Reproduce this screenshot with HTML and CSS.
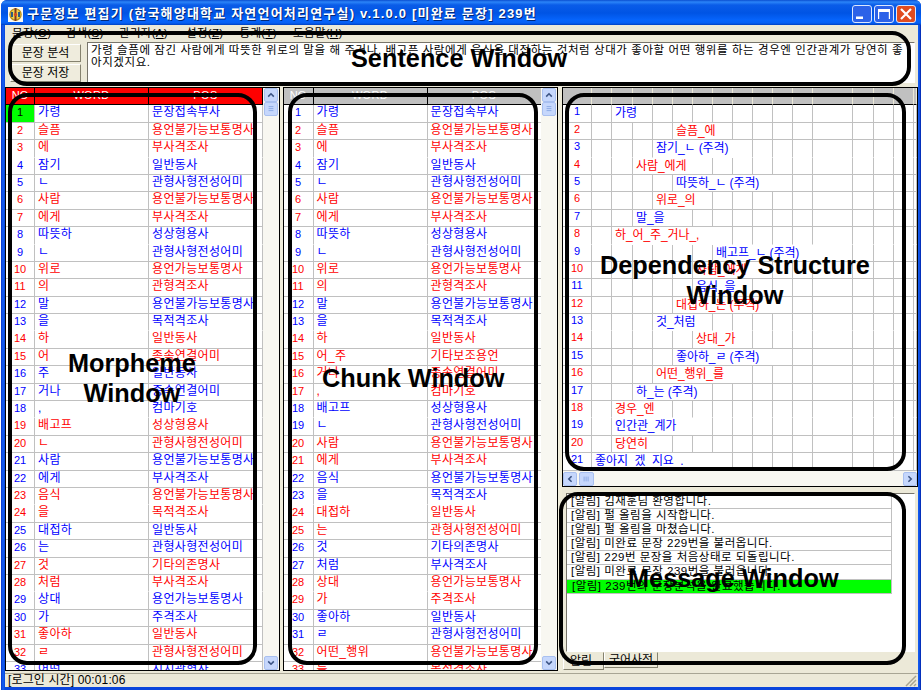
FILE: index.html
```html
<!DOCTYPE html>
<html lang="ko">
<head>
<meta charset="utf-8">
<title>구문정보 편집기</title>
<link rel="stylesheet" href="styles.css">
</head>
<body>
<div class="window">
  <header class="titlebar">
    <svg class="app-icon" width="15" height="15" viewBox="0 0 15 15">
      <rect width="15" height="15" fill="#fbfaf2"/>
      <circle cx="7.5" cy="7.5" r="5.6" fill="#f2d24a" stroke="#b8901c" stroke-width="1.4"/>
      <path d="M7.5 1v13" stroke="#7c3a20" stroke-width="2"/>
      <path d="M4 5v5M11 5v5" stroke="#2c5c80" stroke-width="2"/>
      <circle cx="7.5" cy="7.5" r="1.6" fill="#d84820"/>
    </svg>
    <h1 class="title">구문정보 편집기 (한국해양대학교 자연언어처리연구실) v.1.0.0 [미완료 문장] 239번</h1>
    <div class="controls">
      <svg class="control" viewBox="0 0 20 18"><rect x=".5" y=".5" width="19" height="17" rx="2.5"/><path d="M4 11.500h7v2.500H4z" class="glyph"/></svg>
      <svg class="control" viewBox="0 0 20 18"><rect x=".5" y=".5" width="19" height="17" rx="2.5"/><path d="M4 4h12v10h-1.200V7H5.200v7H4z" class="glyph"/></svg>
      <svg class="control close" viewBox="0 0 20 18"><rect x=".5" y=".5" width="19" height="17" rx="2.5"/><path d="M5 4l10 10M15 4L5 14" class="cross"/></svg>
    </div>
  </header>
  <nav class="menu">
    <span>문장(<u>O</u>)</span><span>검색(<u>S</u>)</span><span class="wide">관리자(<u>A</u>)</span><span>설정(<u>Z</u>)</span><span>통계(<u>T</u>)</span><span>도움말(<u>H</u>)</span>
  </nav>
  <section class="sentence">
    <div class="buttons">
      <button class="button">문장 분석</button>
      <button class="button">문장 저장</button>
    </div>
    <div class="text-box">
      <div class="line line-long">가령 슬픔에 잠긴 사람에게 따뜻한 위로의 말을 해 주거나, 배고픈 사람에게 음식을 대접하는 것처럼 상대가 좋아할 어떤 행위를 하는 경우엔 인간관계가 당연히 좋</div>
      <div class="line">아지겠지요.</div>
    </div>
  </section>
  <main class="panes">
    <section class="pane morphemes">
      <div class="table">
        <div class="row head"><span>NO</span><span>WORD</span><span>POS</span></div>
        <div id="morphemes"></div>
      </div>
      <div class="vscroll">
        <svg class="sb" viewBox="0 0 15 15"><path d="M4 9.500L7.500 6 11 9.500"/></svg>
        <svg class="sb thumb" viewBox="0 0 15 15"><path d="M4.500 4.500h6M4.500 7h6M4.500 9.500h6"/></svg>
        <svg class="sb last" viewBox="0 0 15 15"><path d="M4 5.500L7.500 9 11 5.500"/></svg>
      </div>
    </section>
    <section class="pane chunks">
      <div class="table">
        <div class="row head"><span>NO</span><span>WORD</span><span>POS</span></div>
        <div id="chunks"></div>
      </div>
      <div class="vscroll">
        <svg class="sb" viewBox="0 0 15 15"><path d="M4 9.500L7.500 6 11 9.500"/></svg>
        <svg class="sb thumb" viewBox="0 0 15 15"><path d="M4.500 4.500h6M4.500 7h6M4.500 9.500h6"/></svg>
        <svg class="sb last" viewBox="0 0 15 15"><path d="M4 5.500L7.500 9 11 5.500"/></svg>
      </div>
    </section>
    <div class="right">
      <section class="pane structure">
        <div class="tree" id="tree"></div>
        <div class="hscroll">
          <svg class="sb" viewBox="0 0 15 15"><path d="M9.500 4L6 7.500 9.500 11"/></svg>
          <svg class="sb thumb" viewBox="0 0 15 15"><path d="M4.500 4.500v6M7 4.500v6M9.500 4.500v6"/></svg>
          <svg class="sb last" viewBox="0 0 15 15"><path d="M5.500 4L9 7.500 5.500 11"/></svg>
        </div>
      </section>
      <section class="messages">
        <ul class="log">
          <li>[알림] 김재훈님 환영합니다.</li>
          <li>[알림] 펄 올림을 시작합니다.</li>
          <li>[알림] 펄 올림을 마쳤습니다.</li>
          <li>[알림] 미완료 문장 229번을 불러옵니다.</li>
          <li>[알림] 229번 문장을 처음상태로 되돌립니다.</li>
          <li>[알림] 미완료 문장 239번을 불러옵니다.</li>
          <li class="current">[알림] 239번의 문장분석을 완료했습니다.</li>
        </ul>
        <div class="tabs"><span class="tab active">알림</span><span class="tab">국어사전</span></div>
      </section>
    </div>
  </main>
  <footer class="status">
    <span>[로그인 시간] 00:01:06</span>
    <svg width="12" height="12" viewBox="0 0 12 12"><path d="M1 11L11 1M5 11l6-6M9 11l2-2" stroke="#a8a490" stroke-width="1.500"/></svg>
  </footer>
</div>

<div class="outline o-sentence"></div>
<div class="outline o-morpheme"></div>
<div class="outline o-chunk"></div>
<div class="outline o-structure"></div>
<div class="outline o-message"></div>
<div class="label l-sentence">Sentence Window</div>
<div class="label l-morpheme">Morpheme<br>Window</div>
<div class="label l-chunk">Chunk Window</div>
<div class="label l-structure">Dependency Structure<br>Window</div>
<div class="label l-message">Message Window</div>
<script src="app.js"></script>
</body>
</html>
```
FILE: styles.css
```css
* { box-sizing: border-box; }

body {
  margin: 0;
  width: 922px;
  height: 692px;
  overflow: hidden;
  position: relative;
  background: #fff;
  color: #000;
  font: 12px/14px "Liberation Sans", "Noto Sans CJK KR", sans-serif;
}

.window {
  width: 920px;
  height: 690px;
  margin-left: 1px;
  padding: 0 3px 3px 4px;
  display: flex;
  flex-direction: column;
  background: linear-gradient(90deg, #0a34c8 0, #1560f4 2px, #0a45dc 4px, #0a45dc 916px, #1560f4 918px, #0020a8 920px);
  border-radius: 6px 6px 0 0;
  overflow: hidden;
}

.titlebar {
  height: 25px;
  flex: none;
  margin: 0 -3px 0 -4px;
  padding: 3px 5px 0 7px;
  display: flex;
  align-items: center;
  background: linear-gradient(#0a4ed0 0, #2b84f8 2px, #0a5ce8 5px, #0054e4 13px, #0664fc 20px, #0660f4 23px, #0040c0 25px);
}
.title {
  margin: 0 0 0 4px;
  color: #fff;
  font-size: 13px;
  line-height: 20px;
  letter-spacing: 1.2px;
  white-space: nowrap;
  text-shadow: 1px 1px 0 #002878;
}
.controls { margin-left: auto; display: flex; gap: 2px; }
.control { width: 20px; height: 18px; }
.control rect { fill: #2c62e8; stroke: #dce8ff; }
.control .glyph { fill: #fff; }
.control .cross { stroke: #fff; stroke-width: 2.2; }
.control.close rect { fill: #e04c20; }

.menu {
  height: 17px;
  flex: none;
  padding: 1px 0 0 7px;
  display: flex;
  background: #ece9d8;
  font-size: 11.5px;
  letter-spacing: 0.3px;
}
.menu span { width: 53.5px; white-space: nowrap; }
.menu .wide { width: 67px; }

.sentence {
  height: 45px;
  flex: none;
  display: flex;
  gap: 6px;
  padding: 0 3px 4px 5px;
  background: #ece9d8;
}
.buttons { display: flex; flex-direction: column; gap: 2px; padding-top: 2px; }
.button {
  width: 71px;
  height: 18px;
  padding: 0;
  border: 1px solid;
  border-color: #fff #85826f #85826f #fff;
  background: #efecdd;
  color: #000;
  font: 12px/14px "Liberation Sans", "Noto Sans CJK KR", sans-serif;
}
.text-box {
  flex: 1;
  height: 41px;
  padding: 1px 3px 0;
  border: 1px solid;
  border-color: #77746a #fff #fff #77746a;
  background: #fff;
  font-size: 11.5px;
  line-height: 12px;
  letter-spacing: 0.58px;
  overflow: hidden;
}
.line { white-space: nowrap; }

.panes {
  height: 584px;
  flex: none;
  display: flex;
  gap: 4px;
  background: #efecda;
}
.pane { border: 1px solid #000; background: #fff; overflow: hidden; }
.morphemes, .chunks { display: flex; width: 275px; }
.chunks { width: 276px; margin-left: -1px; }
.table { flex: 1; overflow: hidden; }

.row {
  display: grid;
  grid-template-columns: 29px 114px 114px;
  height: 17.4px;
}
.chunks .row { grid-template-columns: 30px 114px 114px; }
.row span {
  padding-left: 3px;
  border-right: 1px solid #c0c0c0;
  border-bottom: 1px solid #c0c0c0;
  white-space: nowrap;
  overflow: hidden;
  line-height: 14px;
  font-size: 12px;
  letter-spacing: 0.35px;
}
.row span:first-child { padding: 0; text-align: center; font-size: 11px; letter-spacing: 0; }
.row.plain span { border-bottom-color: transparent; }
.row .selected { background: #00ff00; color: #000; }
.blue { color: #0000ff; }
.red { color: #ff0000; }
.row.head { color: #fff; background: #c0c0c0; }
.morphemes .row.head { background: #ff0000; }
.row.head span, .row.head span:first-child {
  padding: 0;
  text-align: center;
  border-color: #000;
  font-size: 11px;
  line-height: 15px;
}

.vscroll {
  width: 16px;
  display: flex;
  flex-direction: column;
  align-items: center;
  background: #f8f7f1;
}
.sb {
  display: block;
  width: 14px;
  height: 14px;
  flex: none;
  border: 1px solid #a9c0f0;
  border-radius: 2px;
  background: #c6d7fc;
  fill: none;
  stroke: #3c5484;
  stroke-width: 2;
}
.sb.thumb { stroke: #7f9fe0; stroke-width: 1; }
.vscroll .last { margin-top: auto; }

.right { flex: 1; display: flex; flex-direction: column; }
.structure { height: 400px; flex: none; display: flex; flex-direction: column; }
.tree { height: 383px; overflow: hidden; }
.branch {
  display: grid;
  grid-template-columns: 29px 20px 21px repeat(9, 20px) 40px 21px 20px 20px 3px;
  height: 17.4px;
}
.branch span {
  border-right: 1px solid #c0c0c0;
  border-bottom: 1px solid #c0c0c0;
  white-space: nowrap;
}
.branch.head { background: #c0c0c0; }
.branch.head span { border-color: #ece9d8; border-bottom-color: #000; }
.branch.plain span { border-bottom-color: transparent; }
.branch .index { text-align: center; font-size: 11px; line-height: 13px; }
.branch .node { padding-left: 3px; font-size: 12px; line-height: 16px; letter-spacing: -0.1px; }
.hscroll {
  height: 15px;
  display: flex;
  align-items: center;
  background: #f8f7f1;
}
.hscroll .thumb { margin-left: 2px; width: 15px; }
.hscroll .last { margin-left: auto; }

.messages { height: 184px; padding: 6px 0 0 4px; background: #ece9d8; }
.log {
  height: 159px;
  margin: 0 3px 0 0;
  padding: 1px 22px 0 0;
  list-style: none;
  background: #fff;
  border: 1px solid;
  border-color: #77746a #fff #fff #77746a;
  font-size: 11.5px;
  letter-spacing: 0.5px;
}
.log li {
  height: 14.1px;
  padding-left: 4px;
  line-height: 13px;
  border-bottom: 1px solid #c0c0c0;
  border-right: 1px solid #c0c0c0;
  white-space: nowrap;
}
.log .current { background: #00ff00; padding-left: 5px; }
.tabs { display: flex; align-items: flex-start; margin-left: -3px; }
.tab {
  height: 16px;
  padding: 0 4px;
  border: 1px solid;
  border-color: transparent #85826f #85826f #fff;
  line-height: 15px;
}
.tab.active { width: 41px; height: 18px; padding-left: 6px; line-height: 17px; }

.status {
  height: 16px;
  flex: none;
  padding: 0 1px 0 3px;
  display: flex;
  align-items: flex-end;
  justify-content: space-between;
  background: linear-gradient(#ece9d8 2px, #a8a594 2px, #a8a594 3px, #ece9d8 3px);
}
.status span { line-height: 14px; letter-spacing: 0.13px; }

.outline { position: absolute; border: 4px solid #000; border-radius: 19px; }
.o-sentence { left: 8px; top: 31px; width: 903px; height: 55px; }
.o-morpheme { left: 8px; top: 93px; width: 249px; height: 572px; }
.o-chunk { left: 288px; top: 93px; width: 250px; height: 572px; }
.o-structure { left: 565px; top: 93px; width: 341px; height: 378px; }
.o-message { left: 559px; top: 492px; width: 347px; height: 173px; }

.label {
  position: absolute;
  font: bold 25.3px/30px "Liberation Sans", sans-serif;
  text-align: center;
  white-space: nowrap;
}
.l-sentence { left: 351px; top: 43px; }
.l-morpheme { left: 68px; top: 348px; }
.l-chunk { left: 322px; top: 363px; }
.l-structure { left: 600px; top: 250px; }
.l-message { left: 628px; top: 563px; }
```
FILE: app.js
```js
const noun = '용언불가능보통명사';
const ending = '관형사형전성어미';

// Each entry: word, part of speech, colour (b = blue, r = red).
const morphemes = [
  ['가령', '문장접속부사', 'b'], ['슬픔', noun, 'r'], ['에', '부사격조사', 'r'],
  ['잠기', '일반동사', 'b'], ['ㄴ', ending, 'b'], ['사람', noun, 'r'],
  ['에게', '부사격조사', 'r'], ['따뜻하', '성상형용사', 'b'], ['ㄴ', ending, 'b'],
  ['위로', '용언가능보통명사', 'r'], ['의', '관형격조사', 'r'], ['말', noun, 'b'],
  ['을', '목적격조사', 'b'], ['하', '일반동사', 'r'], ['어', '종속연결어미', 'r'],
  ['주', '일반동사', 'b'], ['거나', '종속연결어미', 'b'], [',', '컴마기호', 'b'],
  ['배고프', '성상형용사', 'r'], ['ㄴ', ending, 'r'], ['사람', noun, 'b'],
  ['에게', '부사격조사', 'b'], ['음식', noun, 'r'], ['을', '목적격조사', 'r'],
  ['대접하', '일반동사', 'b'], ['는', ending, 'b'], ['것', '기타의존명사', 'r'],
  ['처럼', '부사격조사', 'r'], ['상대', '용언가능보통명사', 'b'], ['가', '주격조사', 'b'],
  ['좋아하', '일반동사', 'r'], ['ㄹ', ending, 'r'], ['어떤', '지시관형사', 'b']
];
const chunks = [
  ['가령', '문장접속부사', 'b'], ['슬픔', noun, 'r'], ['에', '부사격조사', 'r'],
  ['잠기', '일반동사', 'b'], ['ㄴ', ending, 'b'], ['사람', noun, 'r'],
  ['에게', '부사격조사', 'r'], ['따뜻하', '성상형용사', 'b'], ['ㄴ', ending, 'b'],
  ['위로', '용언가능보통명사', 'r'], ['의', '관형격조사', 'r'], ['말', noun, 'b'],
  ['을', '목적격조사', 'b'], ['하', '일반동사', 'r'], ['어_주', '기타보조용언', 'r'],
  ['거나', '종속연결어미', 'r'], [',', '컴마기호', 'r'], ['배고프', '성상형용사', 'b'],
  ['ㄴ', ending, 'b'], ['사람', noun, 'r'], ['에게', '부사격조사', 'r'],
  ['음식', noun, 'b'], ['을', '목적격조사', 'b'], ['대접하', '일반동사', 'r'],
  ['는', ending, 'r'], ['것', '기타의존명사', 'b'], ['처럼', '부사격조사', 'b'],
  ['상대', '용언가능보통명사', 'r'], ['가', '주격조사', 'r'], ['좋아하', '일반동사', 'b'],
  ['ㄹ', ending, 'b'], ['어떤_행위', noun, 'r'], ['를', '목적격조사', 'r']
];
// Each entry: depth, number of columns covered, text.
const tree = [
  [1, 2, '가령'], [4, 3, '슬픔_에'], [3, 5, '잠기_ㄴ (주격)'], [2, 4, '사람_에게'],
  [4, 6, '따뜻하_ㄴ (주격)'], [3, 3, '위로_의'], [2, 3, '말_을'], [1, 6, '하_어_주_거나_,'],
  [6, 6, '배고프_ㄴ (주격)'], [5, 4, '사람_에게'], [5, 3, '음식_을'], [4, 6, '대접하_는 (주격)'],
  [3, 3, '것_처럼'], [5, 3, '상대_가'], [4, 6, '좋아하_ㄹ (주격)'], [3, 5, '어떤_행위_를'],
  [2, 4, '하_는 (주격)'], [1, 3, '경우_엔'], [1, 5, '인간관_계가'], [1, 3, '당연히'],
  [0, 7, '좋아지_겠_지요_.']
];

const isPlain = i => i % 5 === 2 ? ' plain' : '';

function fillTable(id, data, selected) {
  document.getElementById(id).innerHTML = data.map(([word, pos, c], i) =>
    `<div class="row ${c === 'b' ? 'blue' : 'red'}${isPlain(i)}">` +
    `<span${i === selected ? ' class="selected"' : ''}>${i + 1}</span><span>${word}</span><span>${pos}</span></div>`
  ).join('');
}
fillTable('morphemes', morphemes, 0);
fillTable('chunks', chunks, -1);

const columns = 16;
const cells = n => '<span></span>'.repeat(n);
document.getElementById('tree').innerHTML =
  `<div class="branch head">${cells(columns + 1)}</div>` +
  tree.map(([depth, span, text], i) =>
    `<div class="branch ${i % 2 ? 'red' : 'blue'}${isPlain(i)}"><span class="index">${i + 1}</span>` +
    cells(depth) + `<span class="node" style="grid-column: span ${span}">${text}</span>` +
    cells(columns - depth - span) + '</div>'
  ).join('');
```
